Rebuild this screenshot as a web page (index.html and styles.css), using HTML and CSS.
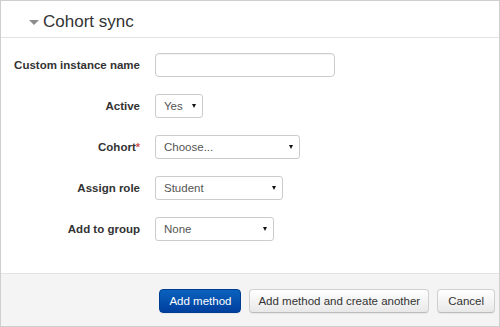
FILE: index.html
```html
<!DOCTYPE html>
<html lang="en">
<head>
  <meta charset="UTF-8" />
  <title>Cohort sync</title>
  <link rel="stylesheet" href="styles.css">
</head>

<body>
  <div class="panel">
    <div class="panel-header">
      <span class="toggle"></span>
      <div class="panel-title">Cohort sync</div>
    </div>

    <div class="form-grid">
      <label class="form-label">Custom instance name</label>
      <div class="form-field"><input type="text" class="text-input"></div>

      <label class="form-label">Active</label>
      <div class="form-field">
        <div class="select select-active"><span>Yes</span><span class="caret"></span></div>
      </div>

      <label class="form-label">Cohort<span class="req">*</span></label>
      <div class="form-field">
        <div class="select select-cohort"><span>Choose...</span><span class="caret"></span></div>
      </div>

      <label class="form-label">Assign role</label>
      <div class="form-field">
        <div class="select select-role"><span>Student</span><span class="caret"></span></div>
      </div>

      <label class="form-label">Add to group</label>
      <div class="form-field">
        <div class="select select-group"><span>None</span><span class="caret"></span></div>
      </div>
    </div>

    <div class="panel-footer">
      <button class="btn btn-primary">Add method</button>
      <button class="btn btn-another">Add method and create another</button>
      <button class="btn">Cancel</button>
    </div>
  </div>
</body>
</html>
```

FILE: styles.css
```css
* {
  margin: 0;
  padding: 0;
  box-sizing: border-box;
  font-family: 'Liberation Sans', Arial, sans-serif;
}

body {
  width: 500px;
  height: 327px;
  background-color: white;
}

.panel {
  width: 500px;
  height: 327px;
  border: 1px solid #cfcfcf;
  display: flex;
  flex-direction: column;
}

.panel-header {
  height: 37px;
  border-bottom: 1px solid #e3e3e3;
  display: flex;
  align-items: center;
  padding-left: 28px;
  padding-top: 6px;
}

.toggle {
  width: 0;
  height: 0;
  border-left: 5px solid transparent;
  border-right: 5px solid transparent;
  border-top: 5px solid #8c8c8c;
  margin-right: 4px;
}

.panel-title {
  font-size: 17px;
  color: #333;
}

.form-grid {
  flex: 1;
  display: grid;
  grid-template-columns: 139px 1fr;
  column-gap: 15px;
  row-gap: 17px;
  padding-top: 15px;
  align-content: start;
}

.form-label {
  font-size: 11.5px;
  font-weight: bold;
  color: #333;
  text-align: right;
  align-self: center;
}

.req {
  color: #d9534f;
  font-size: 11px;
  vertical-align: top;
}

.form-field {
  height: 24px;
  display: flex;
}

.text-input {
  width: 180px;
  height: 24px;
  border: 1px solid #ccc;
  border-radius: 4px;
  box-shadow: inset 0 1px 1px rgba(0, 0, 0, 0.05);
}

.select {
  height: 24px;
  border: 1px solid #ccc;
  border-radius: 3px;
  background-color: white;
  display: flex;
  align-items: center;
  justify-content: space-between;
  padding: 0 6px 0 8px;
  font-size: 11.5px;
  color: #555;
}

.select-active { width: 48px; }
.select-cohort { width: 145px; }
.select-role { width: 128px; }
.select-group { width: 119px; }

.caret {
  width: 0;
  height: 0;
  border-left: 2px solid transparent;
  border-right: 2px solid transparent;
  border-top: 4px solid #111;
}

.panel-footer {
  height: 53px;
  background-color: #f4f4f4;
  border-top: 1px solid #e3e3e3;
  display: flex;
  justify-content: flex-end;
  align-items: flex-start;
  gap: 8px;
  padding: 15px 4px 0 0;
}

.btn {
  height: 24px;
  padding: 0 10px;
  font-size: 11.5px;
  color: #333;
  white-space: nowrap;
  border: 1px solid #d0d0d0;
  border-bottom-color: #bcbcbc;
  border-radius: 4px;
  background: linear-gradient(#ffffff, #e8e8e8);
  box-shadow: 0 1px 1px rgba(0, 0, 0, 0.05);
}

.btn-primary {
  padding: 0 9px;
  color: white;
  border-color: #003c8f;
  background: linear-gradient(#0a62bd, #003f9e);
}

.btn-another {
  padding: 0 8px;
}
```
